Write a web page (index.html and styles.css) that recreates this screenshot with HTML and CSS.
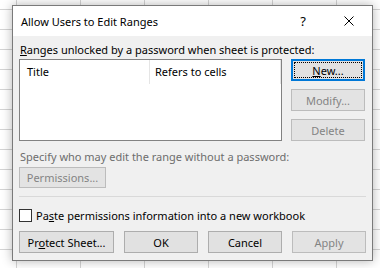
FILE: index.html
```html
<!DOCTYPE html>
<html lang="en">
<head>
  <meta charset="UTF-8">
  <title>Allow Users to Edit Ranges</title>
  <link rel="stylesheet" href="styles.css">
</head>
<body>

  <div class="dialog">
    <div class="titlebar">
      <span class="title">Allow Users to Edit Ranges</span>
      <span class="tb-btn help">?</span>
      <span class="tb-btn close">
        <svg width="10" height="10" viewBox="0 0 10 10"><path d="M0.5 0.5 L9.5 9.5 M9.5 0.5 L0.5 9.5" stroke="#000" stroke-width="1" fill="none"/></svg>
      </span>
    </div>

    <div class="content">
      <div class="label"><u>R</u>anges unlocked by a password when sheet is protected:</div>

      <div class="ranges">
        <div class="listbox">
          <div class="list-head">
            <div class="col col-title">Title</div>
            <div class="col col-refs">Refers to cells</div>
          </div>
        </div>
        <div class="side-buttons">
          <button class="btn default"><span class="focus"><u>N</u>ew...</span></button>
          <button class="btn" disabled>Modify...</button>
          <button class="btn" disabled>Delete</button>
        </div>
      </div>

      <div class="label muted specify">Specify who may edit the range without a password:</div>
      <button class="btn perm" disabled>Permissions...</button>

      <div class="separator"></div>

      <label class="check-row">
        <span class="checkbox"></span>
        <span>Pa<u>s</u>te permissions information into a new workbook</span>
      </label>

      <div class="bottom-buttons">
        <button class="btn wide">Pr<u>o</u>tect Sheet...</button>
        <button class="btn">OK</button>
        <button class="btn">Cancel</button>
        <button class="btn" disabled>Apply</button>
      </div>
    </div>
  </div>

</body>
</html>
```

FILE: styles.css
```css
body {
  margin: 0;
  width: 380px;
  height: 268px;
  overflow: hidden;
  font-family: 'Segoe UI', 'Noto Sans', sans-serif;
  font-size: 11px;
  color: #000;
  background-color: #fff;
  background-image:
    repeating-linear-gradient(to bottom, transparent 0, transparent 9px, #d4d4d4 9px, #d4d4d4 10px, transparent 10px, transparent 20px),
    repeating-linear-gradient(to right, transparent 0, transparent 16px, #d4d4d4 16px, #d4d4d4 17px, transparent 17px, transparent 64px);
  padding-top: 5px;
  box-sizing: border-box;
}

.dialog {
  margin-left: 12px;
  width: 361px;
  height: 256px;
  box-sizing: border-box;
  border: 1px solid #7a7a7a;
  background: #f0f0f0;
  box-shadow: 0 0 10px rgba(0, 0, 0, 0.3);
}

.titlebar {
  height: 30px;
  background: #fff;
  display: flex;
  align-items: center;
}

.title {
  flex-grow: 1;
  padding-left: 8px;
  padding-top: 1px;
  font-size: 11px;
}

.tb-btn {
  width: 46px;
  height: 30px;
  display: flex;
  align-items: center;
  justify-content: center;
}

.tb-btn.help {
  font-size: 13px;
}

.content {
  padding: 6px 0 0 6px;
}

.label {
  height: 16px;
  line-height: 16px;
  padding-left: 1px;
}

.muted {
  color: #6d6d6d;
}

.ranges {
  display: flex;
  margin-top: 1px;
}

.listbox {
  width: 263px;
  height: 82px;
  box-sizing: border-box;
  border: 1px solid #828282;
  background: #fff;
}

.list-head {
  display: flex;
  height: 24px;
}

.col {
  line-height: 24px;
  padding-left: 7px;
  border-right: 1px solid #e5e5e5;
  box-sizing: border-box;
}

.col-title {
  width: 130px;
}

.col-refs {
  width: 131px;
  padding-left: 5px;
}

.side-buttons {
  display: flex;
  flex-direction: column;
  gap: 8px;
  margin-left: 9px;
}

.btn {
  width: 74px;
  height: 22px;
  box-sizing: border-box;
  padding: 0;
  margin: 0;
  font-family: inherit;
  font-size: 11px;
  color: #000;
  background: #e1e1e1;
  border: 1px solid #adadad;
  border-radius: 0;
}

.btn:disabled {
  color: #838383;
  background: #e3e3e3;
  border-color: #bcbcbc;
}

.btn.default {
  border: 2px solid #0078d7;
  padding: 1px;
}

.btn .focus {
  display: flex;
  height: 100%;
  align-items: center;
  justify-content: center;
  border: 1px dotted #000;
  box-sizing: border-box;
}

.specify {
  margin-top: 8px;
}

.btn.perm {
  display: block;
  width: 87px;
  height: 21px;
  margin-top: 2px;
}

.separator {
  width: 347px;
  height: 1px;
  margin-top: 8px;
  background: #d9d9d9;
}

.check-row {
  display: flex;
  align-items: center;
  gap: 4px;
  height: 16px;
  margin-top: 10px;
}

.checkbox {
  width: 13px;
  height: 13px;
  box-sizing: border-box;
  border: 1px solid #333;
  background: #fff;
}

.bottom-buttons {
  display: flex;
  gap: 10px;
  margin-top: 8px;
}

.btn.wide {
  width: 95px;
}
```
